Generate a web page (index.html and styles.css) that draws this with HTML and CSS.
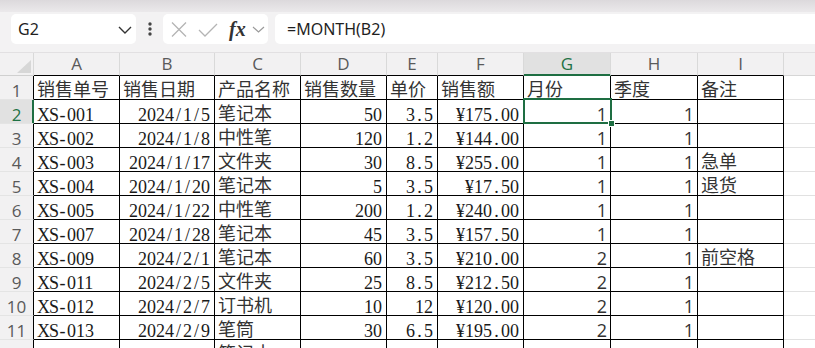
FILE: index.html
```html
<!DOCTYPE html>
<html lang="zh-CN">
<head>
<meta charset="utf-8">
<title>Sheet</title>
<link rel="stylesheet" href="styles.css">
</head>
<body>
<div class="topstrip"></div>
<div class="toolbar">
  <div class="namebox">
    <span class="name">G2</span>
    <svg class="chev" width="14" height="8" viewBox="0 0 14 8"><polyline points="1,1 7,7 13,1" fill="none" stroke="#333" stroke-width="1.4"/></svg>
  </div>
  <div class="more">
    <svg width="6" height="14" viewBox="0 0 6 14"><circle cx="3" cy="2" r="1.7" fill="#444"/><circle cx="3" cy="7" r="1.7" fill="#444"/><circle cx="3" cy="12" r="1.7" fill="#444"/></svg>
  </div>
  <div class="fxbox">
    <svg class="ico-x" width="16" height="15" viewBox="0 0 16 15"><path d="M1 0.5 L15 14.5 M15 0.5 L1 14.5" stroke="#b4b4b4" stroke-width="1.3" fill="none"/></svg>
    <svg class="ico-ok" width="20" height="14" viewBox="0 0 20 14"><path d="M1 7 L7 13 L19 1" stroke="#b4b4b4" stroke-width="1.3" fill="none"/></svg>
    <span class="fx">fx</span>
    <svg class="chev-s" width="13" height="7" viewBox="0 0 13 7"><polyline points="1,1 6.5,6 12,1" fill="none" stroke="#9a9a9a" stroke-width="1.2"/></svg>
  </div>
  <div class="formula">=MONTH(B2)</div>
</div>

<div class="sheet">
  <div class="row head">
    <div class="corner"><svg width="14" height="13" viewBox="0 0 14 13"><polygon points="14,0 14,13 0,13" fill="#d7d7d7"/></svg></div>
    <div class="ch">A</div><div class="ch">B</div><div class="ch">C</div><div class="ch">D</div><div class="ch">E</div><div class="ch">F</div><div class="ch on">G</div><div class="ch">H</div><div class="ch">I</div><div class="ch last"></div>
  </div>

  <div class="row">
    <div class="rh">1</div>
    <div class="c zh">销售单号</div><div class="c zh">销售日期</div><div class="c zh">产品名称</div><div class="c zh">销售数量</div><div class="c zh">单价</div><div class="c zh">销售额</div><div class="c zh">月份</div><div class="c zh">季度</div><div class="c zh">备注</div><div class="g"></div>
  </div>
  <div class="row">
    <div class="rh on">2</div>
    <div class="c"><span class="xs">XS</span><span class="p">-</span>001</div><div class="c n">2024<span class="p">/</span>1<span class="p">/</span>5</div><div class="c zh">笔记本</div><div class="c n">50</div><div class="c n">3<span class="p">.</span>5</div><div class="c n">¥175<span class="p">.</span>00</div><div class="c f sel">1</div><div class="c f">1</div><div class="c zh"></div><div class="g"></div>
  </div>
  <div class="row">
    <div class="rh">3</div>
    <div class="c"><span class="xs">XS</span><span class="p">-</span>002</div><div class="c n">2024<span class="p">/</span>1<span class="p">/</span>8</div><div class="c zh">中性笔</div><div class="c n">120</div><div class="c n">1<span class="p">.</span>2</div><div class="c n">¥144<span class="p">.</span>00</div><div class="c f">1</div><div class="c f">1</div><div class="c zh"></div><div class="g"></div>
  </div>
  <div class="row">
    <div class="rh">4</div>
    <div class="c"><span class="xs">XS</span><span class="p">-</span>003</div><div class="c n">2024<span class="p">/</span>1<span class="p">/</span>17</div><div class="c zh">文件夹</div><div class="c n">30</div><div class="c n">8<span class="p">.</span>5</div><div class="c n">¥255<span class="p">.</span>00</div><div class="c f">1</div><div class="c f">1</div><div class="c zh">急单</div><div class="g"></div>
  </div>
  <div class="row">
    <div class="rh">5</div>
    <div class="c"><span class="xs">XS</span><span class="p">-</span>004</div><div class="c n">2024<span class="p">/</span>1<span class="p">/</span>20</div><div class="c zh">笔记本</div><div class="c n">5</div><div class="c n">3<span class="p">.</span>5</div><div class="c n">¥17<span class="p">.</span>50</div><div class="c f">1</div><div class="c f">1</div><div class="c zh">退货</div><div class="g"></div>
  </div>
  <div class="row">
    <div class="rh">6</div>
    <div class="c"><span class="xs">XS</span><span class="p">-</span>005</div><div class="c n">2024<span class="p">/</span>1<span class="p">/</span>22</div><div class="c zh">中性笔</div><div class="c n">200</div><div class="c n">1<span class="p">.</span>2</div><div class="c n">¥240<span class="p">.</span>00</div><div class="c f">1</div><div class="c f">1</div><div class="c zh"></div><div class="g"></div>
  </div>
  <div class="row">
    <div class="rh">7</div>
    <div class="c"><span class="xs">XS</span><span class="p">-</span>007</div><div class="c n">2024<span class="p">/</span>1<span class="p">/</span>28</div><div class="c zh">笔记本</div><div class="c n">45</div><div class="c n">3<span class="p">.</span>5</div><div class="c n">¥157<span class="p">.</span>50</div><div class="c f">1</div><div class="c f">1</div><div class="c zh"></div><div class="g"></div>
  </div>
  <div class="row">
    <div class="rh">8</div>
    <div class="c"><span class="xs">XS</span><span class="p">-</span>009</div><div class="c n">2024<span class="p">/</span>2<span class="p">/</span>1</div><div class="c zh">笔记本</div><div class="c n">60</div><div class="c n">3<span class="p">.</span>5</div><div class="c n">¥210<span class="p">.</span>00</div><div class="c f">2</div><div class="c f">1</div><div class="c zh">前空格</div><div class="g"></div>
  </div>
  <div class="row">
    <div class="rh">9</div>
    <div class="c"><span class="xs">XS</span><span class="p">-</span>011</div><div class="c n">2024<span class="p">/</span>2<span class="p">/</span>5</div><div class="c zh">文件夹</div><div class="c n">25</div><div class="c n">8<span class="p">.</span>5</div><div class="c n">¥212<span class="p">.</span>50</div><div class="c f">2</div><div class="c f">1</div><div class="c zh"></div><div class="g"></div>
  </div>
  <div class="row">
    <div class="rh">10</div>
    <div class="c"><span class="xs">XS</span><span class="p">-</span>012</div><div class="c n">2024<span class="p">/</span>2<span class="p">/</span>7</div><div class="c zh">订书机</div><div class="c n">10</div><div class="c n">12</div><div class="c n">¥120<span class="p">.</span>00</div><div class="c f">2</div><div class="c f">1</div><div class="c zh"></div><div class="g"></div>
  </div>
  <div class="row">
    <div class="rh">11</div>
    <div class="c"><span class="xs">XS</span><span class="p">-</span>013</div><div class="c n">2024<span class="p">/</span>2<span class="p">/</span>9</div><div class="c zh">笔筒</div><div class="c n">30</div><div class="c n">6<span class="p">.</span>5</div><div class="c n">¥195<span class="p">.</span>00</div><div class="c f">2</div><div class="c f">1</div><div class="c zh"></div><div class="g"></div>
  </div>
  <div class="row">
    <div class="rh">12</div>
    <div class="c"><span class="xs">XS</span><span class="p">-</span>014</div><div class="c n">2024<span class="p">/</span>2<span class="p">/</span>11</div><div class="c zh">笔记本</div><div class="c n">80</div><div class="c n">3<span class="p">.</span>5</div><div class="c n">¥280<span class="p">.</span>00</div><div class="c f">2</div><div class="c f">1</div><div class="c zh"></div><div class="g"></div>
  </div>
</div>
</body>
</html>
```

FILE: styles.css
```css
html, body {
  margin: 0;
  padding: 0;
}
body {
  width: 815px;
  height: 348px;
  overflow: hidden;
  background: #f3f2f3;
  font-family: "Noto Sans", sans-serif;
}

.topstrip {
  height: 12px;
  background: linear-gradient(#dcd9dc, #ebe9eb);
}

.toolbar {
  display: flex;
  align-items: center;
  height: 32px;
  padding: 2px 0 0 11px;
  box-sizing: border-box;
}

.namebox {
  width: 125px;
  height: 30px;
  box-sizing: border-box;
  background: #fff;
  border-radius: 5px;
  display: flex;
  align-items: center;
  justify-content: space-between;
  padding: 0 4px 0 7px;
}
.name {
  font-family: "Noto Sans", sans-serif;
  font-size: 16px;
  color: #1f1f1f;
}
.chev { margin-top: 2px; }

.more {
  width: 27px;
  display: flex;
  justify-content: center;
  align-items: center;
  height: 30px;
}

.fxbox {
  width: 105px;
  height: 30px;
  box-sizing: border-box;
  background: #fff;
  border-radius: 5px;
  display: flex;
  align-items: center;
  padding-left: 8px;
}
.ico-x { margin-right: 11px; }
.ico-ok { margin-right: 11px; margin-top: 1px; }
.fx {
  font-family: "Liberation Serif", serif;
  font-style: italic;
  font-weight: bold;
  font-size: 20px;
  color: #333;
  line-height: 1;
  margin-right: 6px;
}
.chev-s { margin-top: 1px; }

.formula {
  flex: 1;
  height: 30px;
  margin-left: 7px;
  margin-right: -10px;
  background: #fff;
  border-radius: 5px;
  display: flex;
  align-items: center;
  padding-left: 12px;
  font-family: "Noto Sans", sans-serif;
  font-size: 16px;
  color: #1f1f1f;
}

.sheet {
  margin-top: 8px;
}

.row {
  display: grid;
  grid-template-columns: 34px 86px 95px 86px 86px 51px 86px 87px 87px 86px 1fr;
  grid-template-rows: 24px;
  height: 24px;
}

.head {
  background: #f2f1f2;
  border-top: 1px solid #e2e0e2;
  grid-template-rows: 23px;
  box-sizing: border-box;
}
.corner {
  box-sizing: border-box;
  border-right: 1px solid #d9d9d9;
  border-bottom: 1px solid #d0d0d0;
  display: flex;
  justify-content: flex-end;
  align-items: flex-end;
  padding: 0 2px 2px 0;
}
.ch {
  box-sizing: border-box;
  border-right: 1px solid #d9d9d9;
  border-bottom: 1px solid #000;
  text-align: center;
  font-family: "Open Sans", sans-serif;
  font-size: 17px;
  line-height: 22px;
  color: #5a5a5a;
}
.ch.on {
  background: #e1e1e1;
  color: #1e7145;
  border-bottom-color: #1e6e42;
  box-shadow: inset 0 -1px 0 #1e6e42;
}
.ch.last {
  border-right: none;
  border-bottom-color: #d6d6d6;
}

.rh {
  box-sizing: border-box;
  background: #f2f1f2;
  border-right: 1px solid #000;
  border-bottom: 1px solid #e4e4e4;
  text-align: center;
  font-family: "Open Sans", sans-serif;
  font-size: 17px;
  line-height: 29px;
  color: #5a5a5a;
}
.rh.on {
  background: #e1e1e1;
  color: #1e7145;
  border-right-color: #1e6e42;
  box-shadow: inset -1px 0 0 #1e6e42;
}

.c {
  box-sizing: border-box;
  background: #fff;
  border-right: 1px solid #000;
  border-bottom: 1px solid #000;
  padding: 0 4px 0 3px;
  white-space: nowrap;
  font-family: "Liberation Serif", "Noto Sans CJK SC", serif;
  font-size: 18px;
  line-height: 30px;
  color: #1a1a1a;
}
.c .p {
  display: inline-block;
  width: 9px;
  text-align: center;
}
.c .xs {
  letter-spacing: -1px;
}
.c.n {
  text-align: right;
}
.c.zh {
  font-family: "Noto Sans CJK SC", sans-serif;
  line-height: 25px;
  color: #333;
}
.c.f {
  font-family: "Open Sans", sans-serif;
  text-align: right;
  line-height: 28px;
  font-size: 18px;
  padding-right: 3px;
  color: #333;
}
.c.sel {
  position: relative;
}
.c.sel::after {
  content: "";
  position: absolute;
  left: -1px;
  top: -2px;
  width: 89px;
  height: 26px;
  box-sizing: border-box;
  border: 2px solid #1e6e42;
}
.c.sel::before {
  content: "";
  position: absolute;
  right: -4px;
  bottom: -3px;
  width: 5px;
  height: 5px;
  background: #1e6e42;
  outline: 1px solid #fff;
  z-index: 2;
}

.g {
  background: #fff;
  border-bottom: 1px solid #e1e1e1;
}
```
